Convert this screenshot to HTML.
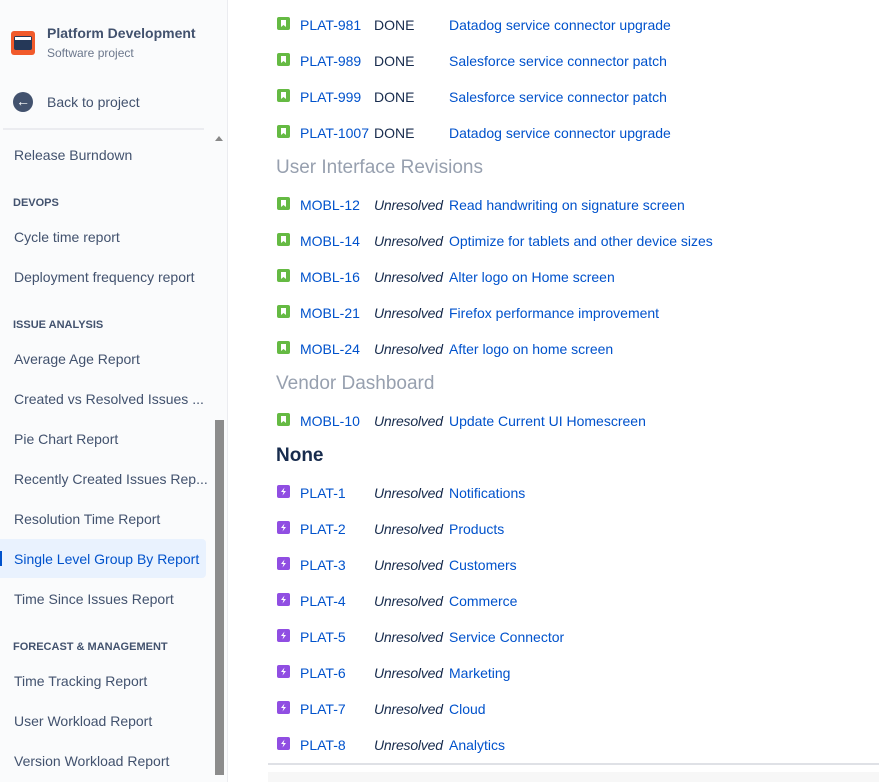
<!DOCTYPE html>
<html><head><meta charset="utf-8"><style>
*{margin:0;padding:0;box-sizing:border-box}
body{width:879px;height:782px;overflow:hidden;font-family:"Liberation Sans",sans-serif;font-size:14px;background:#fff;position:relative}
#side{position:absolute;left:0;top:0;width:228px;height:782px;background:#fafbfc;border-right:1px solid #ebecf0}
.a{position:absolute;white-space:nowrap}
.nav{left:14px;color:#42526e;font-size:14px}
.hd{left:13px;color:#42526e;font-size:11px;font-weight:bold}
.ic{position:absolute;left:277px;width:13px;height:13px;border-radius:2px}
.ic svg{position:absolute;left:0;top:0}
.g{background:#65ba43}.p{background:#904ee2}
.k{left:300px;color:#0052cc}
.s{left:374px;color:#172b4d}
.u{left:374px;color:#172b4d;font-style:italic;letter-spacing:-0.2px}
.m{left:449px;color:#0052cc}
.h2{left:276px;font-size:19px;color:#97a0af}
</style></head><body>
<svg width="0" height="0" style="position:absolute"><defs>
<symbol id="bm" viewBox="0 0 13 13"><path d="M4 3h5v7l-2.5-2L4 10z" fill="#fff"/></symbol>
<symbol id="bo" viewBox="0 0 13 13"><path d="M7.5 2.5L4 7h2.5L5.5 10.5 9 6H6.5z" fill="#fff"/></symbol>
</defs></svg>
<div id="side">
<div class="a" style="left:11px;top:31px;width:24px;height:24px;background:#f15a2b;border-radius:3px"><div style="position:absolute;left:3px;top:5px;width:18px;height:14px;background:#253858;border-radius:2px"></div><div style="position:absolute;left:4px;top:6px;width:16px;height:3px;background:#fff"></div></div>
<div class="a" style="left:47px;top:25px;font-weight:bold;color:#42526e;font-size:14px">Platform Development</div>
<div class="a" style="left:47px;top:46px;color:#6b778c;font-size:12px">Software project</div>
<div class="a" style="left:13px;top:92px;width:20px;height:20px;border-radius:50%;background:#42526e;color:#fff;font-size:14px;line-height:19px;text-align:center;font-weight:bold">←</div>
<div class="a nav" style="left:47px;top:94px">Back to project</div>
<div class="a" style="left:3px;top:128px;width:201px;height:2px;background:#ebecf0"></div>
<div class="a" style="left:215px;top:136px;width:0;height:0;border-left:4px solid transparent;border-right:4px solid transparent;border-bottom:5px solid #888"></div>
<div class="a" style="left:215px;top:420px;width:9px;height:355px;background:#8c8c8c"></div>
<div class="a nav" style="top:147px">Release Burndown</div>
<div class="a hd" style="top:197px">DEVOPS</div>
<div class="a nav" style="top:229px">Cycle time report</div>
<div class="a nav" style="top:269px">Deployment frequency report</div>
<div class="a hd" style="top:319px">ISSUE ANALYSIS</div>
<div class="a nav" style="top:351px">Average Age Report</div>
<div class="a nav" style="top:391px">Created vs Resolved Issues ...</div>
<div class="a nav" style="top:431px">Pie Chart Report</div>
<div class="a nav" style="top:471px">Recently Created Issues Rep...</div>
<div class="a nav" style="top:511px">Resolution Time Report</div>
<div class="a" style="left:0;top:539px;width:206px;height:39px;background:#e9f2fe;border-radius:0 4px 4px 0"></div>
<div class="a" style="left:0;top:551px;width:2px;height:15px;background:#0052cc"></div>
<div class="a nav" style="top:551px;color:#0052cc">Single Level Group By Report</div>
<div class="a nav" style="top:591px">Time Since Issues Report</div>
<div class="a hd" style="top:641px">FORECAST &amp; MANAGEMENT</div>
<div class="a nav" style="top:673px">Time Tracking Report</div>
<div class="a nav" style="top:713px">User Workload Report</div>
<div class="a nav" style="top:753px">Version Workload Report</div>
</div>

<div class="ic g" style="top:17px"><svg width="13" height="13"><use href="#bm"/></svg></div><div class="a k" style="top:17px">PLAT-981</div><div class="a s" style="top:17px">DONE</div><div class="a m" style="top:17px">Datadog service connector upgrade</div>
<div class="ic g" style="top:53px"><svg width="13" height="13"><use href="#bm"/></svg></div><div class="a k" style="top:53px">PLAT-989</div><div class="a s" style="top:53px">DONE</div><div class="a m" style="top:53px">Salesforce service connector patch</div>
<div class="ic g" style="top:89px"><svg width="13" height="13"><use href="#bm"/></svg></div><div class="a k" style="top:89px">PLAT-999</div><div class="a s" style="top:89px">DONE</div><div class="a m" style="top:89px">Salesforce service connector patch</div>
<div class="ic g" style="top:125px"><svg width="13" height="13"><use href="#bm"/></svg></div><div class="a k" style="top:125px">PLAT-1007</div><div class="a s" style="top:125px">DONE</div><div class="a m" style="top:125px">Datadog service connector upgrade</div>
<div class="a h2" style="top:157px">User Interface Revisions</div>
<div class="ic g" style="top:197px"><svg width="13" height="13"><use href="#bm"/></svg></div><div class="a k" style="top:197px">MOBL-12</div><div class="a u" style="top:197px">Unresolved</div><div class="a m" style="top:197px">Read handwriting on signature screen</div>
<div class="ic g" style="top:233px"><svg width="13" height="13"><use href="#bm"/></svg></div><div class="a k" style="top:233px">MOBL-14</div><div class="a u" style="top:233px">Unresolved</div><div class="a m" style="top:233px">Optimize for tablets and other device sizes</div>
<div class="ic g" style="top:269px"><svg width="13" height="13"><use href="#bm"/></svg></div><div class="a k" style="top:269px">MOBL-16</div><div class="a u" style="top:269px">Unresolved</div><div class="a m" style="top:269px">Alter logo on Home screen</div>
<div class="ic g" style="top:305px"><svg width="13" height="13"><use href="#bm"/></svg></div><div class="a k" style="top:305px">MOBL-21</div><div class="a u" style="top:305px">Unresolved</div><div class="a m" style="top:305px">Firefox performance improvement</div>
<div class="ic g" style="top:341px"><svg width="13" height="13"><use href="#bm"/></svg></div><div class="a k" style="top:341px">MOBL-24</div><div class="a u" style="top:341px">Unresolved</div><div class="a m" style="top:341px">After logo on home screen</div>
<div class="a h2" style="top:373px">Vendor Dashboard</div>
<div class="ic g" style="top:413px"><svg width="13" height="13"><use href="#bm"/></svg></div><div class="a k" style="top:413px">MOBL-10</div><div class="a u" style="top:413px">Unresolved</div><div class="a m" style="top:413px">Update Current UI Homescreen</div>
<div class="a h2" style="top:445px;color:#172b4d;font-weight:bold">None</div>
<div class="ic p" style="top:485px"><svg width="13" height="13"><use href="#bo"/></svg></div><div class="a k" style="top:485px">PLAT-1</div><div class="a u" style="top:485px">Unresolved</div><div class="a m" style="top:485px">Notifications</div>
<div class="ic p" style="top:521px"><svg width="13" height="13"><use href="#bo"/></svg></div><div class="a k" style="top:521px">PLAT-2</div><div class="a u" style="top:521px">Unresolved</div><div class="a m" style="top:521px">Products</div>
<div class="ic p" style="top:557px"><svg width="13" height="13"><use href="#bo"/></svg></div><div class="a k" style="top:557px">PLAT-3</div><div class="a u" style="top:557px">Unresolved</div><div class="a m" style="top:557px">Customers</div>
<div class="ic p" style="top:593px"><svg width="13" height="13"><use href="#bo"/></svg></div><div class="a k" style="top:593px">PLAT-4</div><div class="a u" style="top:593px">Unresolved</div><div class="a m" style="top:593px">Commerce</div>
<div class="ic p" style="top:629px"><svg width="13" height="13"><use href="#bo"/></svg></div><div class="a k" style="top:629px">PLAT-5</div><div class="a u" style="top:629px">Unresolved</div><div class="a m" style="top:629px">Service Connector</div>
<div class="ic p" style="top:665px"><svg width="13" height="13"><use href="#bo"/></svg></div><div class="a k" style="top:665px">PLAT-6</div><div class="a u" style="top:665px">Unresolved</div><div class="a m" style="top:665px">Marketing</div>
<div class="ic p" style="top:701px"><svg width="13" height="13"><use href="#bo"/></svg></div><div class="a k" style="top:701px">PLAT-7</div><div class="a u" style="top:701px">Unresolved</div><div class="a m" style="top:701px">Cloud</div>
<div class="ic p" style="top:737px"><svg width="13" height="13"><use href="#bo"/></svg></div><div class="a k" style="top:737px">PLAT-8</div><div class="a u" style="top:737px">Unresolved</div><div class="a m" style="top:737px">Analytics</div>
<div class="a" style="left:268px;top:763px;width:611px;height:2px;background:#dfe1e6"></div>
<div class="a" style="left:268px;top:772px;width:611px;height:10px;background:#f7f7f7"></div>
</body></html>
